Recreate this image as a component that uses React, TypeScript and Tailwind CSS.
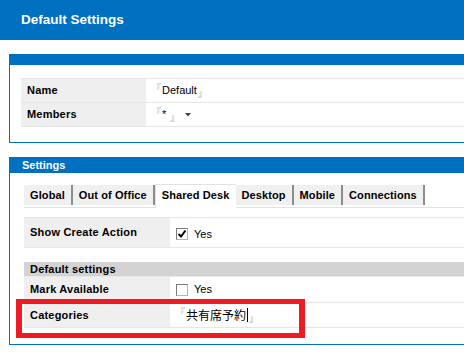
import React from 'react';

const BLUE = 'bg-[#0070c0]';

function Bracket({ close = false }: { close?: boolean }) {
  return (
    <span
      className={`inline-block text-[9px] leading-none text-[#8a8a8a] font-['Noto_Sans_CJK_JP',sans-serif] ${
        close ? 'self-end' : 'self-start'
      }`}
    >
      {close ? '』' : '『'}
    </span>
  );
}

function Checkbox({ checked }: { checked?: boolean }) {
  return (
    <span className="flex h-[12px] w-[12px] items-center justify-center border border-t-[#7a7a7a] border-l-[#7a7a7a] border-r-[#b4b4b4] border-b-[#b4b4b4] bg-white">
      {checked && (
        <svg width="10" height="10" viewBox="0 0 10 10">
          <polyline points="1.5,5 4,7.5 8.5,1.5" fill="none" stroke="#000" strokeWidth="2" />
        </svg>
      )}
    </span>
  );
}

function Row({
  label,
  h,
  labelW,
  children,
}: {
  label: string;
  h: string;
  labelW: string;
  children?: React.ReactNode;
}) {
  return (
    <div className={`flex ${h} border-b border-[#e6e6e6]`}>
      <div
        className={`${labelW} flex shrink-0 items-center bg-[#efefef] pl-[6px] text-[11px] font-bold tracking-[0.2px] text-black`}
      >
        {label}
      </div>
      <div className="flex flex-1 items-center bg-white pl-[6px] text-[11px] text-black">
        {children}
      </div>
    </div>
  );
}

const TABS = ['Global', 'Out of Office', 'Shared Desk', 'Desktop', 'Mobile', 'Connections'];

export default function App() {
  return (
    <div className="relative h-[361px] w-[464px] overflow-hidden bg-white font-['Liberation_Sans',Arial,sans-serif]">
      <div className={`flex h-[40px] items-center ${BLUE} pl-[21px] text-[13.5px] font-bold text-white`}>
        Default Settings
      </div>

      <div className="flex flex-col gap-[14px] pl-[9px] pt-[14px]">
        {/* general panel */}
        <div className="w-[540px] border border-[#0070c0]">
          <div className={`h-[10px] ${BLUE}`} />
          <div className="pb-[15px] pl-[11px] pt-[13px]">
            <div className="border-t border-[#e6e6e6]">
              <Row label="Name" h="h-[24px]" labelW="w-[125px]">
                <span className="flex h-[15px] items-stretch gap-[1px]">
                  <Bracket />
                  <span className="leading-[15px]">Default</span>
                  <Bracket close />
                </span>
              </Row>
              <Row label="Members" h="h-[24px]" labelW="w-[125px]">
                <span className="flex h-[15px] items-stretch gap-[1px]">
                  <Bracket />
                  <span className="leading-[15px]">*</span>
                  <span className="w-[2px]" />
                  <Bracket close />
                  <svg width="6" height="4" viewBox="0 0 6 4" className="ml-[5px] self-center">
                    <polygon points="0,0 6,0 3,3.5" fill="#444" />
                  </svg>
                </span>
              </Row>
            </div>
          </div>
        </div>

        {/* settings panel */}
        <div className="w-[540px] border border-[#0070c0]">
          <div className={`flex h-[15px] items-center ${BLUE} pl-[12px] text-[11px] font-bold text-white`}>
            Settings
          </div>
          <div className="pb-[16px] pl-[14px] pt-[11px]">
            <div className="flex items-end border-b border-[#e2e2e2]">
              {TABS.map((t) =>
                t === 'Shared Desk' ? (
                  <div
                    key={t}
                    className="-mb-px flex h-[24px] items-center border-l border-t border-[#e2e2e2] bg-white px-[6px] pb-[2px] text-[11px] font-bold tracking-[0.1px] text-black"
                  >
                    {t}
                  </div>
                ) : (
                  <div
                    key={t}
                    className="mb-[2px] flex h-[20px] items-center border-r-2 border-[#8c8c8c] bg-[#f0f0f0] px-[6px] pt-[1px] text-[11px] font-bold tracking-[0.1px] text-black"
                  >
                    {t}
                  </div>
                ),
              )}
            </div>

            <div className="mt-[9px] border-t border-[#e6e6e6]">
              <Row label="Show Create Action" h="h-[30px]" labelW="w-[146px]">
                <span className="flex items-center gap-[6px] pt-[3px]">
                  <Checkbox checked />
                  <span>Yes</span>
                </span>
              </Row>
            </div>

            <div className="mt-[14px] flex h-[15px] items-center border-b border-[#e6e6e6] bg-[#d3d3d3] pl-[6px] text-[11px] font-bold tracking-[0.2px] text-black">
              Default settings
            </div>
            <Row label="Mark Available" h="h-[26px]" labelW="w-[146px]">
              <span className="flex items-center gap-[6px]">
                <Checkbox />
                <span>Yes</span>
              </span>
            </Row>
            <Row label="Categories" h="h-[25px]" labelW="w-[146px]">
              <span className="flex h-[16px] items-stretch gap-[1px]">
                <Bracket />
                <span className="leading-[16px] text-[12px] font-['Noto_Sans_CJK_JP',sans-serif]">
                  共有席予約
                </span>
                <span className="w-px self-center h-[14px] bg-black" />
                <Bracket close />
              </span>
            </Row>
          </div>
        </div>
      </div>

      <div className="absolute left-[16px] top-[299px] h-[39px] w-[289px] border-x-[6px] border-y-[5px] border-[#ed1c24]" />
    </div>
  );
}
